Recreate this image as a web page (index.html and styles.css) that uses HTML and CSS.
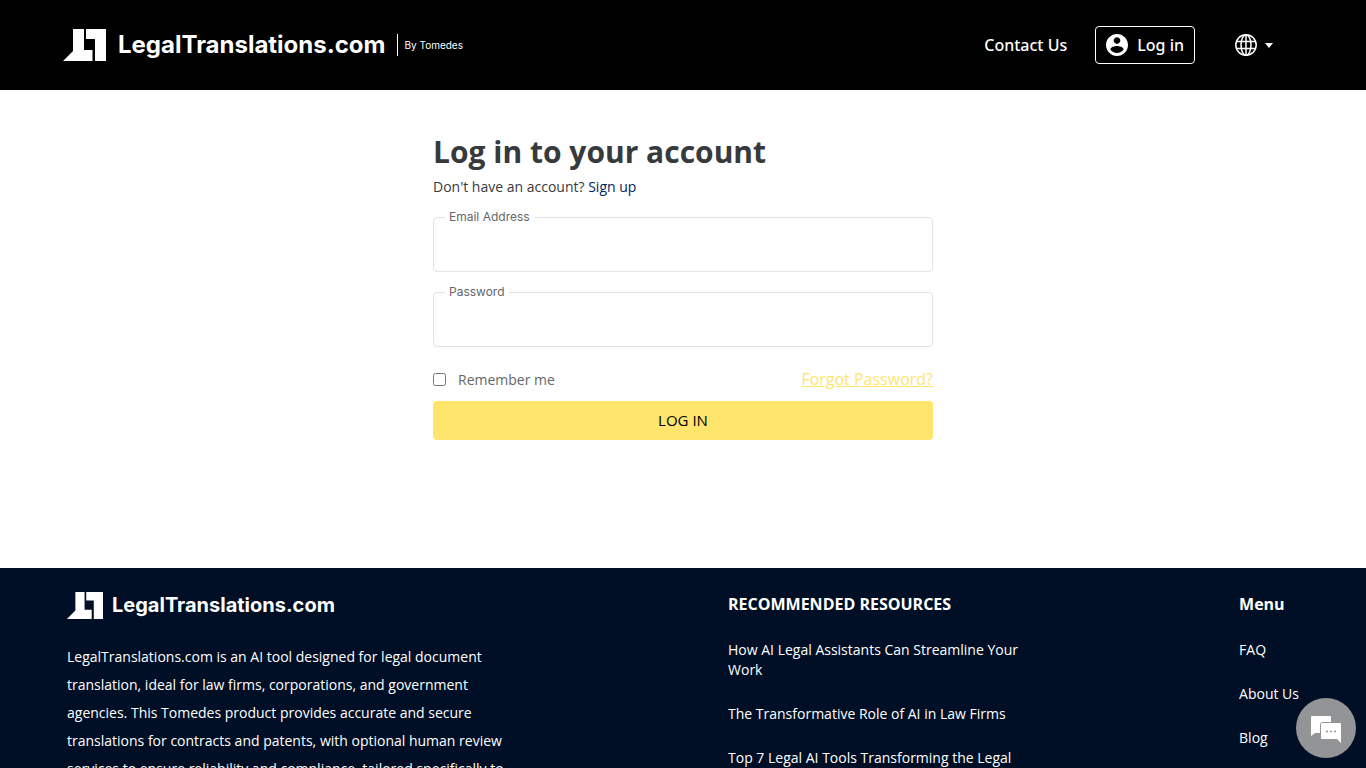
FILE: index.html
```
<!DOCTYPE html>
<html lang="en">
<head>
    <meta charset="UTF-8">
    <meta name="viewport" content="width=device-width, initial-scale=1.0">
    <title>Log in - LegalTranslations.com</title>
    <link rel="stylesheet" href="styles.css">
</head>
<body>
    <header class="header">
        <a class="logo" href="#">
            <svg class="logo-mark" viewBox="0 0 43 32" aria-hidden="true">
                <path d="M10 0h11v21h8.500v11H0l10-10z"/>
                <path d="M23 0h20v32H32V10h-9z"/>
            </svg>
            <span class="logo-name">LegalTranslations.com</span>
            <span class="logo-by">By Tomedes</span>
        </a>
        <nav class="nav">
            <a class="contact" href="#">Contact Us</a>
            <a class="login-link" href="#">
                <svg class="user-icon" viewBox="2 2 20 20" aria-hidden="true">
                    <path d="M12 2C6.480 2 2 6.480 2 12s4.480 10 10 10 10-4.480 10-10S17.520 2 12 2zm0 3c1.660 0 3 1.340 3 3s-1.340 3-3 3-3-1.340-3-3 1.340-3 3-3zm0 14.200c-2.500 0-4.710-1.280-6-3.220.03-1.990 4-3.080 6-3.080 1.990 0 5.970 1.090 6 3.080-1.290 1.940-3.500 3.220-6 3.220z"/>
                </svg>
                Log in
            </a>
            <button class="lang" type="button" aria-label="Language">
                <svg class="globe-icon" viewBox="0 0 22 22" aria-hidden="true">
                    <circle cx="11" cy="11" r="10.200"/>
                    <ellipse cx="11" cy="11" rx="5" ry="10.200"/>
                    <path d="M11 1v20M2 7.500h18M2 14.500h18"/>
                </svg>
                <span class="caret"></span>
            </button>
        </nav>
    </header>

    <main class="main">
        <form class="login-form">
            <h1>Log in to your account</h1>
            <p class="signup">Don't have an account? <a href="#">Sign up</a></p>
            <div class="field">
                <label for="email">Email Address</label>
                <input type="email" id="email">
            </div>
            <div class="field">
                <label for="password">Password</label>
                <input type="password" id="password">
            </div>
            <div class="options">
                <input type="checkbox" id="remember">
                <label for="remember">Remember me</label>
                <a class="forgot" href="#">Forgot Password?</a>
            </div>
            <button class="submit" type="submit">LOG IN</button>
        </form>
    </main>

    <footer class="footer">
        <div class="about">
            <a class="logo" href="#">
                <svg class="logo-mark" viewBox="0 0 43 32" aria-hidden="true">
                    <path d="M10 0h11v21h8.500v11H0l10-10z"/>
                    <path d="M23 0h20v32H32V10h-9z"/>
                </svg>
                <span class="logo-name">LegalTranslations.com</span>
            </a>
            <p>LegalTranslations.com is an AI tool designed for legal document translation, ideal for law firms, corporations, and government agencies. This Tomedes product provides accurate and secure translations for contracts and patents, with optional human review services to ensure reliability and compliance, tailored specifically to</p>
        </div>
        <div class="resources">
            <h2>RECOMMENDED RESOURCES</h2>
            <ul>
                <li><a href="#">How AI Legal Assistants Can Streamline Your Work</a></li>
                <li><a href="#">The Transformative Role of AI in Law Firms</a></li>
                <li><a href="#">Top 7 Legal AI Tools Transforming the Legal</a></li>
            </ul>
        </div>
        <div class="menu">
            <h2>Menu</h2>
            <ul>
                <li><a href="#">FAQ</a></li>
                <li><a href="#">About Us</a></li>
                <li><a href="#">Blog</a></li>
            </ul>
        </div>
    </footer>

    <button class="chat" type="button" aria-label="Chat">
        <svg viewBox="0 0 30 28" aria-hidden="true">
            <path d="M1 0h18a1 1 0 0 1 1 1v5h-8a3 3 0 0 0-3 3v8H4l-4 3V1a1 1 0 0 1 1-1z"/>
            <path d="M11 7h18a1 1 0 0 1 1 1v19l-4-4H11a1 1 0 0 1-1-1V8a1 1 0 0 1 1-1z"/>
            <g class="dots"><circle cx="16" cy="15.500" r="1"/><circle cx="20" cy="15.500" r="1"/><circle cx="24" cy="15.500" r="1"/></g>
        </svg>
    </button>
</body>
</html>
```

FILE: styles.css
```
* {
    box-sizing: border-box;
}
body {
    margin: 0;
    font-family: "Open Sans", sans-serif;
    font-size: 14px;
    color: #373a3c;
    background-color: #fff;
}
a {
    color: inherit;
    text-decoration: none;
}

/* Header */
.header {
    display: flex;
    justify-content: space-between;
    align-items: center;
    height: 90px;
    padding: 0 93px 0 63px;
    background-color: #000;
    color: #fff;
}
.logo {
    display: flex;
    align-items: center;
    gap: 12px;
    font-family: Inter, sans-serif;
}
.logo-mark {
    width: 43px;
    height: 32px;
    fill: #fff;
}
.logo-name {
    font-size: 24px;
    font-weight: 700;
    line-height: 32px;
}
.logo-by {
    padding-left: 6px;
    border-left: 1px solid #fff;
    font-size: 10px;
    line-height: 22px;
}
.nav {
    display: flex;
    align-items: center;
    font-family: "Noto Sans", sans-serif;
    font-size: 16px;
    font-weight: 500;
}
.contact {
    margin-right: 28px;
}
.login-link {
    display: flex;
    align-items: center;
    gap: 9px;
    height: 38px;
    margin-right: 40px;
    padding: 0 10px;
    border: 1px solid #fff;
    border-radius: 4px;
}
.user-icon {
    width: 22px;
    height: 22px;
    fill: #fff;
}
.lang {
    display: flex;
    align-items: center;
    gap: 8px;
    padding: 0;
    border: none;
    background: none;
}
.globe-icon {
    width: 22px;
    height: 22px;
    fill: none;
    stroke: #fff;
    stroke-width: 1.5;
}
.caret {
    border: 4px solid transparent;
    border-top: 5px solid #fff;
    border-bottom: none;
}

/* Login form */
.main {
    min-height: 478px;
    padding: 40px 16px;
}
.login-form {
    max-width: 500px;
    margin: 0 auto;
}
h1 {
    margin: 0;
    font-size: 30px;
    line-height: 44px;
}
.signup {
    margin: 3px 0 20px;
    line-height: 20px;
}
.signup a {
    color: #002664;
}
.field {
    position: relative;
    margin-bottom: 20px;
}
.field label {
    position: absolute;
    top: -10px;
    left: 12px;
    padding: 0 4px;
    font-family: Inter, sans-serif;
    font-size: 12px;
    line-height: 20px;
    color: #666;
    background-color: #fff;
}
.field input {
    display: block;
    width: 100%;
    height: 55px;
    padding: 0 16px;
    border: 1px solid #e2e2e2;
    border-radius: 4px;
    font: inherit;
}
.options {
    display: flex;
    align-items: center;
    height: 24px;
    margin-bottom: 10px;
    color: #666;
}
.options input {
    margin: 0 12px 0 0;
}
.forgot {
    margin-left: auto;
    font-size: 16px;
    color: #ffe56b;
    text-decoration: underline;
}
.submit {
    width: 100%;
    height: 39px;
    padding: 0 0 2px;
    border: none;
    border-radius: 4px;
    font-family: inherit;
    font-size: 15px;
    color: #000;
    background-color: #ffe56b;
    cursor: pointer;
}

/* Footer */
.footer {
    display: flex;
    justify-content: space-between;
    padding: 20px 67px 40px;
    background-color: #000f25;
    color: #fff;
}
.about {
    width: 450px;
}
.about .logo {
    gap: 9px;
    height: 34px;
}
.about .logo-mark {
    width: 36px;
    height: 27px;
}
.about .logo-name {
    font-size: 20px;
}
.about p {
    margin: 21px 0 0;
    line-height: 28px;
}
.resources {
    width: 300px;
}
.footer h2 {
    margin: 4px 0 24px;
    font-size: 16px;
    line-height: 24px;
}
.footer ul {
    margin: 0;
    padding: 0;
    list-style: none;
}
.footer li {
    margin-bottom: 24px;
    line-height: 20px;
}

/* Chat bubble */
.chat {
    display: flex;
    align-items: center;
    justify-content: center;
    position: fixed;
    right: 10px;
    bottom: 10px;
    width: 60px;
    height: 60px;
    padding: 4px 0 0;
    border: none;
    border-radius: 50%;
    background-color: #939496;
    cursor: pointer;
}
.chat svg {
    width: 30px;
    height: 28px;
    fill: #fff;
}
.chat .dots {
    fill: #939496;
}
```
